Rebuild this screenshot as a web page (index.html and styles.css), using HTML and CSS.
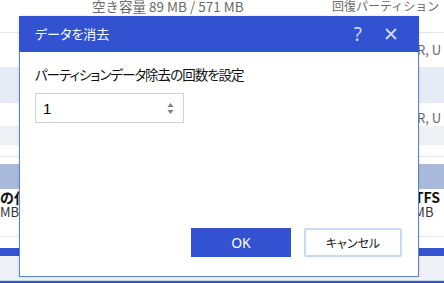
FILE: index.html
```html
<!DOCTYPE html>
<html lang="ja">
<head>
<meta charset="utf-8">
<link rel="stylesheet" href="styles.css">
</head>
<body>
<div class="page">
  <div class="row r0">
    <span class="c-free">空き容量 89 MB / 571 MB</span>
    <span class="c-type">回復パーティション</span>
  </div>
  <div class="row r1"><span class="c-right">R, U</span></div>
  <div class="row r2"></div>
  <div class="row r3"><span class="c-right">R, U</span></div>
  <div class="row r4"></div>
  <div class="row r5"></div>
  <div class="row r5b"></div>
  <div class="row r6"></div>
  <div class="row r7">
    <div class="c-left">
      <div class="bold">の化</div>
      <div class="sub">MB</div>
    </div>
    <div class="c-right2">
      <div class="bold">NTFS</div>
      <div class="sub">1 MB</div>
    </div>
  </div>
  <div class="row r8"></div>
  <div class="row r9"></div>
  <div class="row r10"></div>
  <div class="row r11"></div>
</div>

<div class="dialog">
  <div class="titlebar">
    <span class="title">データを消去</span>
    <span class="help">?</span>
    <svg class="close" width="12" height="12" viewBox="0 0 12 12"><path d="M1 1 L11 11 M11 1 L1 11" stroke="#d3ddf7" stroke-width="1.8" fill="none"/></svg>
  </div>
  <div class="body">
    <div class="label">パーティションデータ除去の回数を設定</div>
    <div class="spin">
      <span class="val">1</span>
      <svg class="arrows" width="7" height="12" viewBox="0 0 7 12"><path d="M3.5 0 L6.5 4 L0.5 4 Z M0.5 7 L6.5 7 L3.5 11 Z" fill="#808080"/></svg>
    </div>
    <div class="footer">
      <button class="btn ok">OK</button>
      <button class="btn cancel">キャンセル</button>
    </div>
  </div>
</div>
</body>
</html>
```

FILE: styles.css
```css
html, body {
  margin: 0;
  padding: 0;
}
body {
  width: 444px;
  height: 283px;
  overflow: hidden;
  position: relative;
  background: #ffffff;
  font-family: "Noto Sans CJK JP", "Noto Sans", sans-serif;
}
.page {
  width: 444px;
  display: flex;
  flex-direction: column;
}
.row {
  display: flex;
  flex: none;
  box-sizing: border-box;
  font-size: 13px;
  color: #6a6a6a;
}
.r0 {
  height: 33px;
  border-bottom: 1px solid #e2e5ea;
  align-items: flex-start;
}
.r0 span {
  line-height: 16px;
  margin-top: -2px;
  white-space: nowrap;
}
.c-free { margin-left: 92px; width: 240px; font-size: 13.5px; }
.c-type { font-size: 12px; }
.r1 { height: 34px; align-items: center; }
.c-right { margin-left: 417px; white-space: nowrap; line-height: 14px; }
.r2 { height: 36px; background: #e6ebf6; }
.r3 { height: 23px; align-items: flex-end; padding-bottom: 1px; }
.r4 { height: 19px; background: #eef0f5; }
.r5 { height: 12px; border-bottom: 1px solid #e2e5ea; }
.r5b { height: 7px; }
.r6 { height: 25px; background: #a9badb; }
.r7 {
  height: 48px;
  border-bottom: 1px solid #e6e8ec;
  justify-content: space-between;
  color: #222;
}
.c-left, .c-right2 { white-space: nowrap; }
.c-right2 { margin-right: 4px; }
.bold {
  font-weight: bold;
  font-size: 14px;
  line-height: 14px;
  color: #111;
  margin-top: 1px;
}
.sub { font-size: 13px; line-height: 14px; margin-top: 1px; color: #333; }
.r8 { height: 11px; }
.r9 { height: 8px; background: #3553cf; }
.r10 { height: 25px; background: #eef1f7; border-bottom: 1px solid #c9d3e4; }
.r11 { height: 4px; background: #3553cf; }

/* dialog */
.dialog {
  position: absolute;
  left: 19px;
  top: 16px;
  width: 400px;
  height: 261px;
  box-sizing: border-box;
  background: #ffffff;
  border: 1px solid #5f84bf;
  border-top: none;
  display: flex;
  flex-direction: column;
  box-shadow: 0 0 3px rgba(0,0,0,0.12);
  font-family: "Noto Sans CJK JP", sans-serif;
}
.titlebar {
  height: 36px;
  margin: 0 -1px;
  background: #3352d1;
  display: flex;
  align-items: center;
  padding: 0 22px 0 16px;
  color: #fff;
}
.title {
  font-size: 13px;
  font-feature-settings: "palt";
  flex: 1;
  margin-top: -1px;
}
.help {
  font-family: "Noto Sans", sans-serif;
  font-size: 19px;
  color: #d3ddf7;
  margin-right: 23px;
  line-height: 20px;
}
.close { display: block; }
.body {
  flex: 1;
  display: flex;
  flex-direction: column;
  padding: 12px 16px 19px 15px;
}
.label {
  font-size: 13.5px;
  line-height: 20px;
  color: #111;
  font-feature-settings: "palt";
  letter-spacing: -1px;
  white-space: nowrap;
}
.spin {
  margin-top: 9px;
  width: 149px;
  height: 30px;
  box-sizing: border-box;
  border: 1px solid #d3d3d3;
  display: flex;
  align-items: center;
  padding: 0 9px 0 7px;
}
.val {
  flex: 1;
  font-family: "Liberation Sans", sans-serif;
  font-size: 15px;
  color: #000;
}
.arrows { display: block; margin-top: 1px; }
.footer {
  margin-top: auto;
  display: flex;
  justify-content: flex-end;
  gap: 13px;
}
.btn {
  height: 29px;
  box-sizing: border-box;
  font-family: "Noto Sans CJK JP", sans-serif;
  font-size: 12px;
  font-feature-settings: "palt";
  padding: 0;
  margin: 0;
}
.ok {
  width: 100px;
  background: #3352d1;
  color: #fff;
  border: none;
  font-family: "Noto Sans", sans-serif;
  font-size: 14px;
}
.cancel {
  width: 98px;
  background: #fff;
  color: #222;
  border: 2px solid #c8daf2;
  border-radius: 2px;
}
```
